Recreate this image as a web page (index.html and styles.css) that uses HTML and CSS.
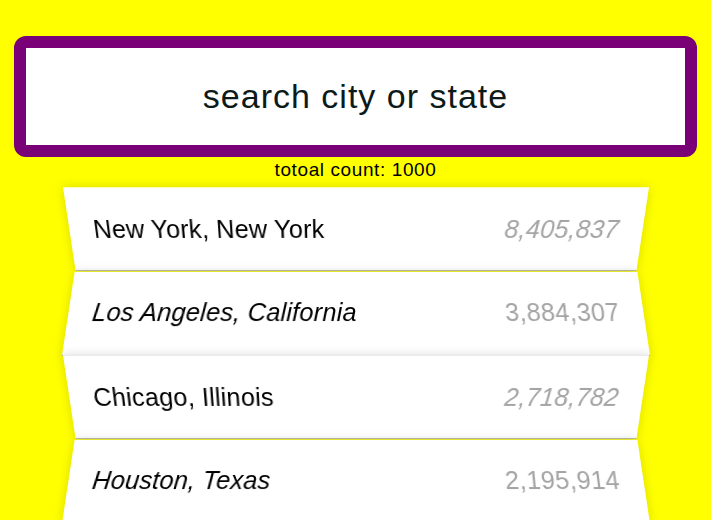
FILE: index.html
```html
<!DOCTYPE html>
<html lang="en">
<head>
<meta charset="utf-8">
<title>Type Ahead</title>
<link rel="stylesheet" href="styles.css">
</head>
<body>
<form class="search-form">
  <input type="text" class="search" placeholder="search city or state">
  <p class="count">totoal count: 1000</p>
  <ul class="suggestions">
    <li><span class="name">New York, New York</span><span class="population">8,405,837</span></li>
    <li><span class="name">Los Angeles, California</span><span class="population">3,884,307</span></li>
    <li><span class="name">Chicago, Illinois</span><span class="population">2,718,782</span></li>
    <li><span class="name">Houston, Texas</span><span class="population">2,195,914</span></li>
  </ul>
</form>
</body>
</html>
```
FILE: styles.css
```css
html {
  background: #ffff00;
}
body {
  margin: 0;
  font-family: "Liberation Sans", Arial, sans-serif;
  overflow: hidden;
}
.search-form {
  width: 574px;
  margin: 0 auto;
  padding-top: 36px;
}
.search {
  display: block;
  box-sizing: border-box;
  width: 683px;
  height: 121px;
  margin: 0 0 0 -54.5px;
  border: 12px solid #790077;
  border-radius: 12px;
  background: #fff;
  outline: 0;
  text-align: center;
  font-family: "Liberation Sans", Arial, sans-serif;
  font-size: 34px;
  letter-spacing: 1px;
  color: #0c1a1a;
}
.search::placeholder {
  color: #0c1a1a;
  opacity: 1;
}
.count {
  margin: 0;
  height: 28px;
  line-height: 26px;
  text-align: center;
  font-size: 19px;
  letter-spacing: 0.6px;
  color: #000;
}
.suggestions {
  margin: 0;
  padding: 0;
  list-style: none;
  position: relative;
}
.suggestions li {
  box-sizing: border-box;
  height: 84px;
  padding: 0 24px;
  display: flex;
  align-items: center;
  justify-content: space-between;
  background: #fff;
  border-bottom: 1px solid #b8b8b8;
  box-shadow: 0 0 10px rgba(0, 0, 0, 0.14);
  font-size: 25.3px;
  letter-spacing: 0.2px;
  line-height: 1;
}
.suggestions li:nth-child(odd) {
  transform: perspective(100px) rotateX(-3deg) translateY(3px);
}
.suggestions li:nth-child(even) {
  transform: perspective(100px) rotateX(3deg) translateY(2px) scale(1.001);
}
.name {
  color: #000;
}
.population {
  color: #a4a4a4;
}
.suggestions li:nth-child(odd) .population,
.suggestions li:nth-child(even) .name {
  font-style: italic;
}
```
